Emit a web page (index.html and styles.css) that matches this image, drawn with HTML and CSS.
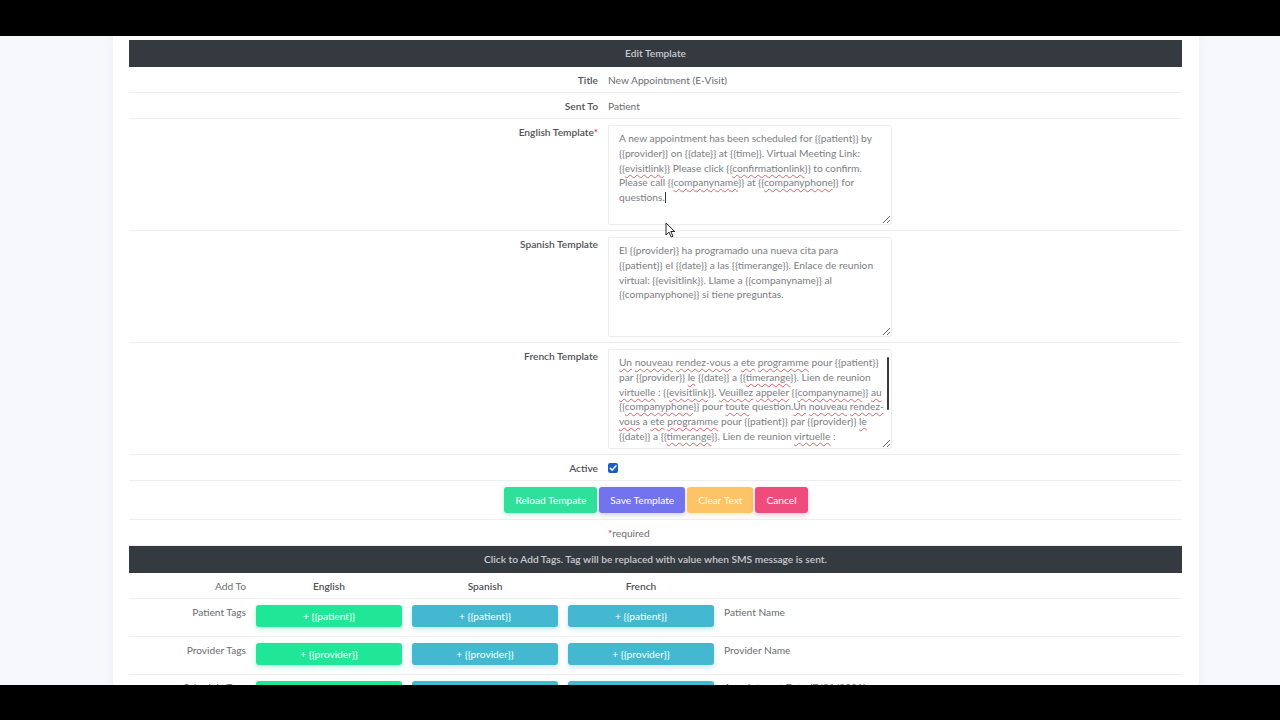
FILE: index.html
```html
<!DOCTYPE html>
<html>
<head>
<meta charset="utf-8">
<link rel="stylesheet" href="styles.css">
</head>
<body>
<div class="topbar"></div>
<div class="viewport">
  <div class="card">
    <div class="form">
      <div class="head">Edit Template</div>
      <div class="row short">
        <div class="lbl">Title</div>
        <div class="val">New Appointment (E-Visit)</div>
      </div>
      <div class="row short">
        <div class="lbl">Sent To</div>
        <div class="val">Patient</div>
      </div>
      <div class="row tall">
        <div class="lbl top">English Template<span class="req">*</span></div>
        <div class="val"><div class="ta">A new appointment has been scheduled for {{patient}} by<br>{{provider}} on {{date}} at {{time}}. Virtual Meeting Link:<br>{{<span class="sp">evisitlink</span>}} Please click {{<span class="sp">confirmationlink</span>}} to confirm.<br>Please call {{<span class="sp">companyname</span>}} at {{<span class="sp">companyphone</span>}} for<br>questions.<span class="caret"></span></div></div>
      </div>
      <div class="row tall">
        <div class="lbl top">Spanish Template</div>
        <div class="val"><div class="ta">El {{provider}} ha programado una nueva cita para<br>{{patient}} el {{date}} a las {{timerange}}. Enlace de reunion<br>virtual: {{evisitlink}}. Llame a {{companyname}} al<br>{{companyphone}} si tiene preguntas.</div></div>
      </div>
      <div class="row tall">
        <div class="lbl top">French Template</div>
        <div class="val"><div class="tawrap"><div class="ta scroll"><span class="sp">Un</span> <span class="sp">nouveau</span> <span class="sp">rendez-vous</span> a <span class="sp">ete</span> <span class="sp">programme</span> pour {{patient}}<br>par {{provider}} <span class="sp">le</span> {{date}} a {{<span class="sp">timerange</span>}}. Lien de reunion<br><span class="sp">virtuelle</span> : {{<span class="sp">evisitlink</span>}}. <span class="sp">Veuillez</span> <span class="sp">appeler</span> {{<span class="sp">companyname</span>}} <span class="sp">au</span><br>{{<span class="sp">companyphone</span>}} pour <span class="sp">toute</span> question.<span class="sp">Un</span> <span class="sp">nouveau</span> <span class="sp">rendez-</span><br><span class="sp">vous</span> a <span class="sp">ete</span> <span class="sp">programme</span> pour {{patient}} par {{provider}} <span class="sp">le</span><br>{{date}} a {{<span class="sp">timerange</span>}}. Lien de reunion <span class="sp">virtuelle</span> :<br>{{<span class="sp">evisitlink</span>}}. <span class="sp">Veuillez</span> <span class="sp">appeler</span> {{<span class="sp">companyname</span>}} <span class="sp">au</span><br>{{<span class="sp">companyphone</span>}} pour <span class="sp">toute</span> question.<span class="sp">Un</span> <span class="sp">nouveau</span> <span class="sp">rendez-</span><br><span class="sp">vous</span> a <span class="sp">ete</span> <span class="sp">programme</span> pour {{patient}} par {{provider}} <span class="sp">le</span><br>{{date}} a {{<span class="sp">timerange</span>}}. Lien de reunion <span class="sp">virtuelle</span> :<br>{{<span class="sp">evisitlink</span>}}. <span class="sp">Veuillez</span> <span class="sp">appeler</span> {{<span class="sp">companyname</span>}} <span class="sp">au</span><br>{{<span class="sp">companyphone</span>}} pour <span class="sp">toute</span> question.</div><span class="thumb"></span></div></div>
      </div>
      <div class="row short">
        <div class="lbl">Active</div>
        <div class="val"><span class="chk"><svg viewBox="0 0 10 10" width="10" height="10"><rect x="0" y="0" width="10" height="10" rx="2" fill="#1b5fc6"/><path d="M2.2 5.2 L4.2 7.1 L7.9 2.9" fill="none" stroke="#fff" stroke-width="1.5" stroke-linecap="round" stroke-linejoin="round"/></svg></span></div>
      </div>
      <div class="row actions">
        <button class="btn green">Reload Tempate</button>
        <button class="btn indigo">Save Template</button>
        <button class="btn yellow">Clear Text</button>
        <button class="btn pink">Cancel</button>
      </div>
      <div class="row short">
        <div class="lbl"></div>
        <div class="val"><span class="req">*</span>required</div>
      </div>
      <div class="head">Click to Add Tags. Tag will be replaced with value when SMS message is sent.</div>
    </div>
    <div class="tags">
      <div class="trow thead">
        <div class="tl">Add To</div>
        <div class="tc b">English</div>
        <div class="tc b">Spanish</div>
        <div class="tc b">French</div>
        <div class="td"></div>
      </div>
      <div class="trow">
        <div class="tl">Patient Tags</div>
        <div class="tc"><button class="tag tg">+ {{patient}}</button></div>
        <div class="tc"><button class="tag tb">+ {{patient}}</button></div>
        <div class="tc"><button class="tag tb">+ {{patient}}</button></div>
        <div class="td">Patient Name</div>
      </div>
      <div class="trow">
        <div class="tl">Provider Tags</div>
        <div class="tc"><button class="tag tg">+ {{provider}}</button></div>
        <div class="tc"><button class="tag tb">+ {{provider}}</button></div>
        <div class="tc"><button class="tag tb">+ {{provider}}</button></div>
        <div class="td">Provider Name</div>
      </div>
      <div class="trow last">
        <div class="tl">Schedule Tags</div>
        <div class="tc"><button class="tag tg">+ {{date}}</button></div>
        <div class="tc"><button class="tag tb">+ {{date}}</button></div>
        <div class="tc"><button class="tag tb">+ {{date}}</button></div>
        <div class="td">Appointment Date (7/31/2021)</div>
      </div>
    </div>
    <svg class="cursor" width="11" height="16" viewBox="0 0 11 16"><path d="M1 1 L1 13 L4 10.2 L6.2 15 L8 14.2 L5.8 9.5 L9.8 9.5 Z" fill="#fff" stroke="#222" stroke-width="1" stroke-linejoin="round"/></svg>
  </div>
</div>
<div class="bottombar"></div>
</body>
</html>
```

FILE: styles.css
```css
* { box-sizing: border-box; }
html, body { margin: 0; padding: 0; }
body {
  width: 1280px;
  height: 720px;
  overflow: hidden;
  background: #000;
  font-family: Lato, "Open Sans", "Liberation Sans", sans-serif;
  font-size: 10.2px;
  color: #666;
  display: flex;
  flex-direction: column;
}
.topbar { height: 36px; background: #000; flex: none; }
.bottombar { height: 35px; background: #000; flex: none; }
.viewport {
  height: 649px;
  flex: none;
  overflow: hidden;
  background: #f6f8fc;
  padding-left: 113px;
}
.card {
  position: relative;
  width: 1086px;
  min-height: 700px;
  background: #fff;
  padding: 4px 17px 0 16px;
  box-shadow: 0 0 12px rgba(40, 60, 120, 0.06);
}
.form { width: 1053px; }
.head {
  height: 27px;
  background: #353a41;
  color: #c6cad0;
  font-weight: 600;
  display: flex;
  align-items: center;
  justify-content: center;
  padding-bottom: 1px;
}
.row {
  display: grid;
  grid-template-columns: 474px 1fr;
  border-bottom: 1px solid #eeeff1;
}
.row.short { height: 26px; align-items: center; }
.row.tall { height: 112px; padding: 6px 0; }
.lbl {
  text-align: right;
  padding-right: 5px;
  font-weight: 600;
  color: #4f5257;
}
.lbl.top { padding-top: 0; line-height: 14px; }
.val { padding-left: 5px; color: #6b6d71; }
.req { color: #e0324f; }
.tawrap { position: relative; width: 284px; height: 100px; }
.ta {
  width: 284px;
  height: 100px;
  border: 1px solid #ececee;
  border-radius: 2px;
  padding: 5px 10px 0;
  line-height: 14.8px;
  color: #7c7e83;
  white-space: nowrap;
  overflow-x: hidden;
  overflow-y: auto;
  resize: both;
  box-shadow: 0 1px 2px rgba(0,0,0,0.02);
}
.thumb {
  position: absolute;
  right: 3px;
  top: 8px;
  width: 2px;
  height: 53px;
  background: #3a3a3a;
  border-radius: 1px;
}
.sp {
  text-decoration-line: underline;
  text-decoration-style: wavy;
  text-decoration-color: rgba(222, 50, 60, 0.75);
  text-decoration-thickness: 0.6px;
  text-underline-offset: 1.5px;
}
.caret {
  display: inline-block;
  width: 1px;
  height: 11px;
  background: #333;
  vertical-align: -2px;
}
.chk { display: inline-flex; padding-top: 3px; }
.row.actions {
  display: flex;
  justify-content: center;
  align-items: center;
  gap: 2px;
  height: 39px;
  padding-left: 1px;
}
.btn {
  font-family: inherit;
  font-size: 10.2px;
  border: 0;
  border-radius: 3px;
  height: 26px;
  padding: 0 11px;
  color: #fff;
}
.btn.green { background: #2ee09a; box-shadow: 0 2px 5px rgba(46,224,154,0.35); }
.btn.indigo { background: #7373ee; box-shadow: 0 2px 5px rgba(115,115,238,0.35); }
.btn.yellow { background: #fcc466; color: #fff8ea; box-shadow: 0 2px 5px rgba(252,196,102,0.35); }
.btn.pink { background: #ef4c7d; box-shadow: 0 2px 5px rgba(239,76,125,0.35); }
.tags { width: 1053px; }
.trow {
  display: grid;
  grid-template-columns: 122px 156px 156px 156px 1fr;
  height: 38px;
  border-bottom: 1px solid #eeeff1;
  padding-top: 6px;
}
.trow.thead { height: 26px; padding-top: 0; align-items: center; }
.tl { text-align: right; padding-right: 5px; color: #6b6d71; line-height: 12px; padding-top: 1px; }
.trow.thead .tl { line-height: normal; padding-top: 0; }
.trow.last .tl, .trow.last .td { padding-top: 0; }
.tc { padding: 0 5px; text-align: center; }
.tc.b { font-weight: 600; color: #4f5257; }
.td { padding-left: 5px; color: #6b6d71; line-height: 12px; padding-top: 1px; }
.tag {
  width: 146px;
  height: 22px;
  border: 0;
  border-radius: 3px;
  color: #fff;
  font-family: inherit;
  font-size: 10.2px;
}
.tg { background: #20e698; box-shadow: 0 2px 5px rgba(32,230,152,0.35); }
.tb { background: #44b8d0; box-shadow: 0 2px 5px rgba(68,184,208,0.35); }
.cursor { position: absolute; left: 552px; top: 186px; }
```
